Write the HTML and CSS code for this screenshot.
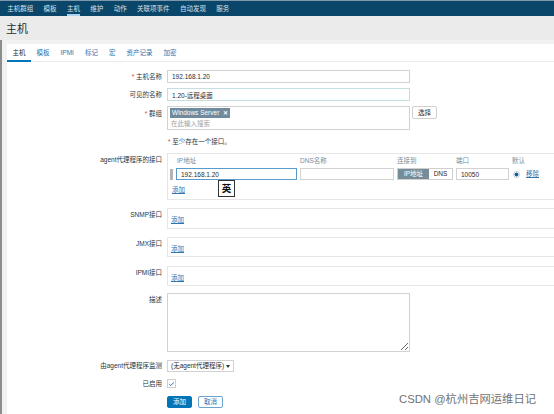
FILE: index.html
```html
<!DOCTYPE html>
<html lang="zh">
<head>
<meta charset="utf-8">
<title>主机</title>
<link rel="stylesheet" href="styles.css">
</head>
<body>
<div class="topline"></div>
<nav class="mainnav">
  <a href="#">主机群组</a>
  <a href="#">模板</a>
  <a href="#" class="active">主机</a>
  <a href="#">维护</a>
  <a href="#">动作</a>
  <a href="#">关联项事件</a>
  <a href="#">自动发现</a>
  <a href="#">服务</a>
</nav>
<header class="pagehead"><h1>主机</h1></header>
<main class="wrap">
  <section class="card">
    <ul class="tabs">
      <li class="active">主机</li>
      <li>模板</li>
      <li>IPMI</li>
      <li>标记</li>
      <li>宏</li>
      <li>资产记录</li>
      <li>加密</li>
    </ul>
    <form class="form">
      <div class="row mid">
        <label class="lbl"><span class="req">*</span> 主机名称</label>
        <div class="field"><input class="txt" type="text" value="192.168.1.20"></div>
      </div>
      <div class="row mid g5">
        <label class="lbl">可见的名称</label>
        <div class="field"><input class="txt soft" type="text" value="1.20-远程桌面"></div>
      </div>
      <div class="row g5">
        <label class="lbl top4"><span class="req">*</span> 群组</label>
        <div class="field inline">
          <div class="multi">
            <span class="tag">Windows Server <b class="x">✕</b></span>
            <span class="ph">在此输入搜索</span>
          </div>
          <button type="button" class="btn-alt">选择</button>
        </div>
      </div>
      <div class="row g8">
        <span class="lbl"></span>
        <div class="note"><span class="req">*</span> 至少存在一个接口。</div>
      </div>
      <div class="row g7">
        <label class="lbl top">agent代理程序的接口</label>
        <div class="ifbox agent">
          <div class="ifgrid">
            <span></span>
            <span class="th th-ip">IP地址</span>
            <span class="th">DNS名称</span>
            <span class="th">连接到</span>
            <span class="th">端口</span>
            <span class="th">默认</span>
            <span class="grip"></span>
            <input class="txt focus" type="text" value="192.168.1.20">
            <input class="txt" type="text" value="">
            <div class="seg"><span class="on">IP地址</span><span>DNS</span></div>
            <input class="txt" type="text" value="10050">
            <div class="defcell"><span class="radio"></span><a href="#" class="link">移除</a></div>
          </div>
          <div class="addrow"><a href="#" class="link">添加</a></div>
        </div>
      </div>
      <div class="row g8">
        <label class="lbl top">SNMP接口</label>
        <div class="ifbox small h21"><a href="#" class="link">添加</a></div>
      </div>
      <div class="row g8">
        <label class="lbl top">JMX接口</label>
        <div class="ifbox small"><a href="#" class="link">添加</a></div>
      </div>
      <div class="row g9">
        <label class="lbl top">IPMI接口</label>
        <div class="ifbox small"><a href="#" class="link">添加</a></div>
      </div>
      <div class="row g7">
        <label class="lbl top">描述</label>
        <div class="field"><textarea class="area"></textarea></div>
      </div>
      <div class="row mid g8">
        <label class="lbl">由agent代理程序监测</label>
        <div class="field"><button type="button" class="select">(无agent代理程序)<i class="caret"></i></button></div>
      </div>
      <div class="row mid g7">
        <label class="lbl">已启用</label>
        <div class="field"><span class="check"><svg viewBox="0 0 10 10" width="8" height="8"><path d="M1.8 5.2 L4 7.3 L8.3 2.6" fill="none" stroke="#1a6fb0" stroke-width="1.4"/></svg></span></div>
      </div>
      <div class="row g8">
        <span class="lbl"></span>
        <div class="field inline btns">
          <button type="button" class="btn-main">添加</button>
          <button type="button" class="btn-out">取消</button>
        </div>
      </div>
    </form>
  </section>
</main>
<div class="ime">英</div>
<div class="watermark">CSDN @杭州吉网运维日记</div>
</body>
</html>
```
FILE: styles.css
```css
* { box-sizing: border-box; }
html, body { margin: 0; padding: 0; }
body {
  width: 554px;
  height: 414px;
  overflow: hidden;
  position: relative;
  background: #f2f2f2;
  font-family: "Liberation Sans", Arial, "Noto Sans CJK SC", sans-serif;
  font-size: 6.5px;
  line-height: 8px;
  color: #2a363d;
}
.topline { height: 1px; background: #7d98aa; }
.mainnav {
  display: flex;
  height: 15px;
  background: #0a466a;
  padding-left: 2px;
}
.mainnav a {
  position: relative;
  color: #d6e0e7;
  text-decoration: none;
  padding: 0 5.2px;
  line-height: 15px;
}
.mainnav a.active::after {
  content: "";
  position: absolute;
  left: 5px;
  right: 5px;
  bottom: 0;
  height: 2px;
  background: #a9d3ef;
}
.pagehead {
  height: 24px;
  background: #ebebeb;
  padding-left: 6px;
}
.pagehead h1 {
  margin: 0;
  font-size: 11px;
  font-weight: normal;
  line-height: 26px;
  color: #2b2b2b;
}
.wrap {
  height: 374px;
  border-left: 2px solid #8c8c8c;
  padding: 4px 0 0 5px;
  background: #f1f1f1;
}
.card {
  height: 100%;
  background: #fff;
}
.tabs {
  display: flex;
  list-style: none;
  margin: 0;
  padding: 0;
  height: 18px;
  border-bottom: 1px solid #ebebeb;
}
.tabs li {
  position: relative;
  padding: 0 5.5px;
  line-height: 17px;
  color: #2d74b0;
}
.tabs li.active { color: #1f2c33; }
.tabs li.active::after {
  content: "";
  position: absolute;
  left: 0;
  right: 0;
  bottom: -1px;
  height: 2px;
  background: #0275b8;
}
.form { padding-top: 8px; }
.row {
  display: grid;
  grid-template-columns: 155px 1fr;
  column-gap: 5px;
  align-items: start;
}
.row.mid { align-items: center; }
.g5 { margin-top: 5px; }
.g7 { margin-top: 7px; }
.g8 { margin-top: 8px; }
.g9 { margin-top: 9px; }
.lbl {
  text-align: right;
  color: #2a363d;
  white-space: nowrap;
}
.lbl.top { padding-top: 3px; }
.lbl.top4 { padding-top: 4px; }
.req { color: #e33734; }
.field { min-width: 0; }
.inline { display: flex; align-items: flex-start; gap: 2px; }
.txt {
  display: block;
  width: 243px;
  height: 13px;
  margin: 0;
  padding: 0 4px;
  border: 1px solid #d2d2d2;
  background: #fff;
  font: inherit;
  color: #1f2c33;
  outline: none;
}
.txt.soft { border-color: #c3dfe0; }
.txt.focus { border-color: #5b9bc9; }
.multi {
  width: 243px;
  height: 24px;
  border: 1px solid #d2d2d2;
  padding: 1px 2px;
  display: flex;
  flex-direction: column;
  align-items: flex-start;
  gap: 1px;
}
.tag {
  background: #718b9c;
  color: #fff;
  padding: 0 2px;
  line-height: 9px;
  white-space: nowrap;
}
.tag .x { font-size: 5.5px; margin-left: 2px; }
.ph { color: #a3a3a3; padding-left: 1px; line-height: 10px; }
.btn-alt {
  height: 13px;
  padding: 0 5px;
  border: 1px solid #cfcfcf;
  border-radius: 2px;
  background: #fff;
  font: inherit;
  color: #1f2c33;
}
.note { padding-left: 1px; }
.ifbox {
  width: 400px;
  border: 1px solid #e6e6e6;
}
.ifbox.agent {
  height: 47px;
  padding: 2px 0 0 2px;
  display: flex;
  flex-direction: column;
}
.ifgrid {
  display: grid;
  grid-template-columns: 3px 121px 94px 56px 53px auto;
  column-gap: 3px;
  row-gap: 3px;
  align-items: center;
}
.th { color: #768d99; line-height: 9px; }
.th-ip { padding-left: 1px; }
.ifgrid .txt { width: 100%; height: 12px; }
.grip {
  height: 11px;
  background-image: radial-gradient(circle, #b4b4b4 0.6px, transparent 0.8px);
  background-size: 1.5px 1.5px;
}
.seg {
  display: flex;
  height: 12px;
  border: 1px solid #cfcfcf;
}
.seg span {
  flex: 1;
  text-align: center;
  line-height: 10px;
  color: #1f2c33;
}
.seg span.on { flex: 0 0 31px; background: #768d99; color: #fff; }
.defcell { display: flex; align-items: center; gap: 6px; padding-left: 1px; }
.radio {
  width: 7px;
  height: 7px;
  border-radius: 50%;
  border: 1px solid #c9c9c9;
  background: radial-gradient(circle, #0a63b0 0 1.8px, #fff 2.2px);
}
.link { color: #2d74b0; text-decoration: underline; }
.addrow { margin-top: 6px; padding-left: 2px; }
.ifbox.small { padding: 7px 0 0 3px; height: 20px; }
.ifbox.small.h21 { height: 21px; }
.area {
  display: block;
  width: 243px;
  height: 59px;
  margin: 0;
  border: 1px solid #d2d2d2;
  font: inherit;
}
.select {
  display: flex;
  align-items: center;
  width: 67px;
  height: 12px;
  padding: 0 3px;
  border: 1px solid #d2d2d2;
  background: #fff;
  font: inherit;
  color: #1f2c33;
  white-space: nowrap;
}
.caret {
  margin-left: auto;
  width: 0;
  height: 0;
  border-left: 2px solid transparent;
  border-right: 2px solid transparent;
  border-top: 3px solid #333;
}
.check {
  display: flex;
  align-items: center;
  justify-content: center;
  width: 9px;
  height: 9px;
  border: 1px solid #cfcfcf;
  background: #fff;
}
.btns { gap: 6px; }
.btn-main, .btn-out {
  height: 12px;
  width: 25px;
  padding: 0;
  border-radius: 2px;
  font: inherit;
}
.btn-main { background: #0275b8; border: 1px solid #0275b8; color: #fff; }
.btn-out { background: #fff; border: 1px solid #6aa5d2; color: #2d74b0; }
.ime {
  position: absolute;
  left: 218px;
  top: 180px;
  width: 17px;
  height: 17px;
  border: 1.5px solid #333;
  background: #fff;
  font-family: "Noto Sans CJK SC", sans-serif;
  font-weight: bold;
  font-size: 9.5px;
  line-height: 14px;
  text-align: center;
  color: #111;
}
.watermark {
  position: absolute;
  left: 399px;
  top: 392px;
  font-family: "Liberation Sans", "Noto Sans CJK SC", sans-serif;
  font-size: 11.3px;
  line-height: 14px;
  color: #727272;
  white-space: nowrap;
}
```
